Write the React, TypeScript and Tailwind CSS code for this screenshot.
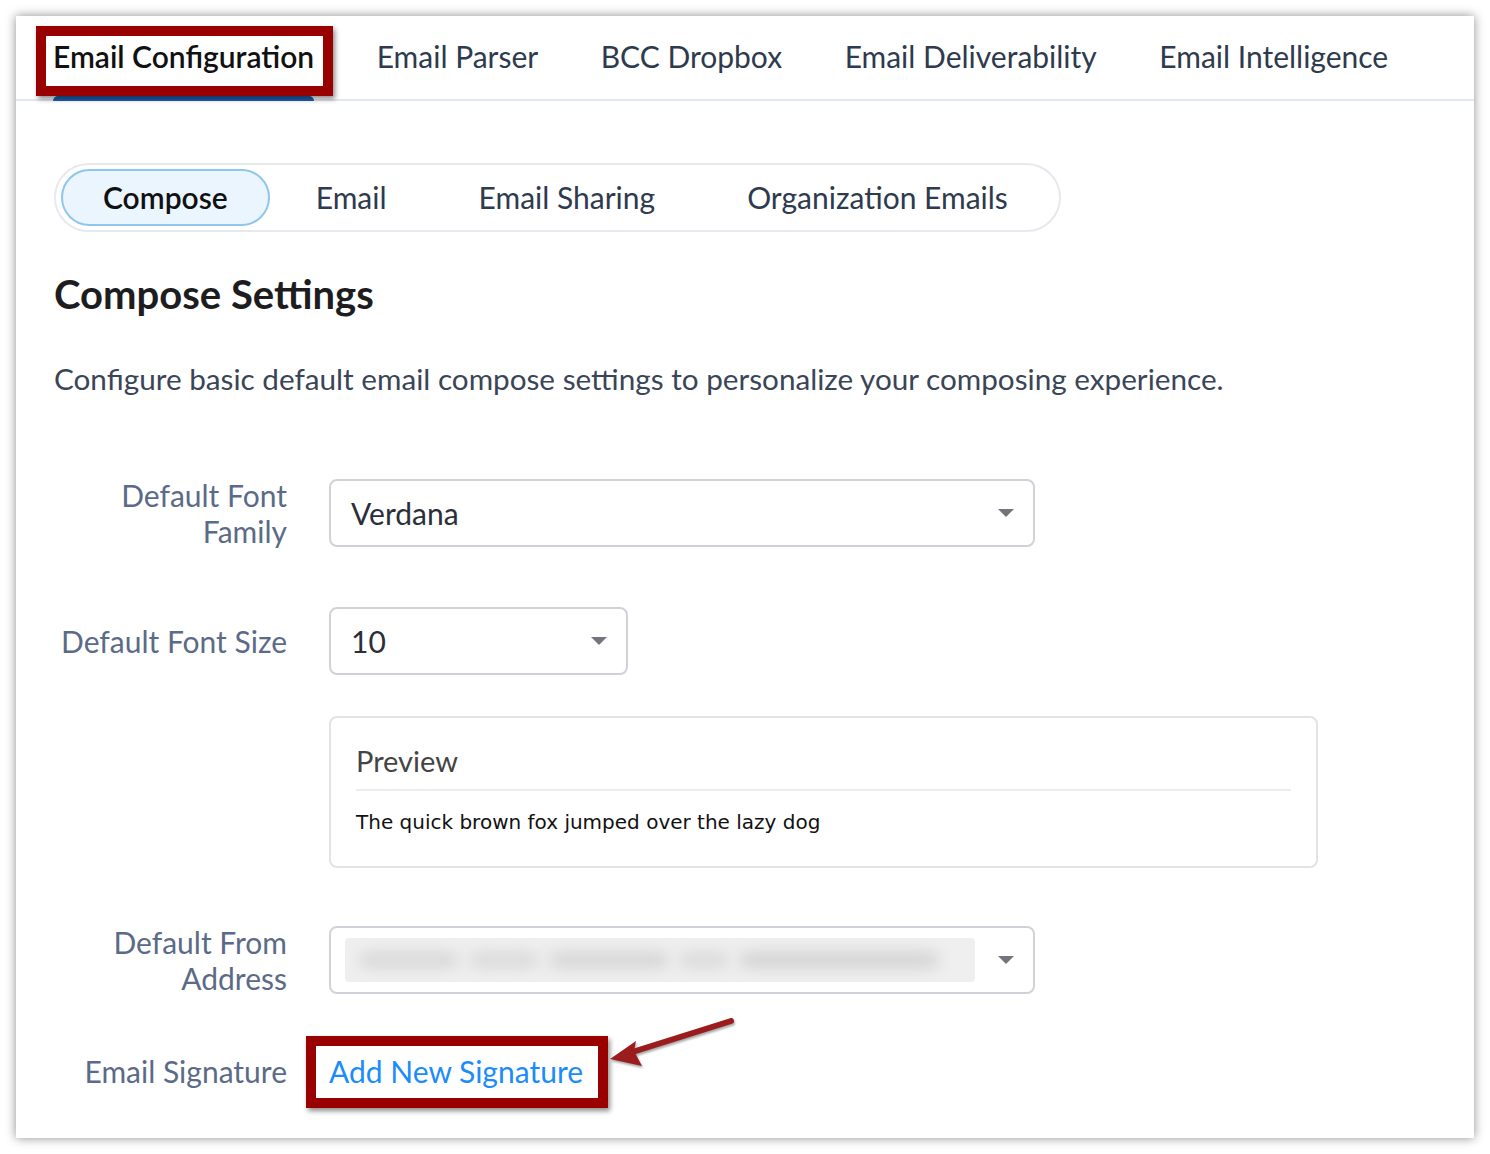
import React from "react";

const tabs = ["Email Configuration", "Email Parser", "BCC Dropbox", "Email Deliverability", "Email Intelligence"];
const subTabs = ["Compose", "Email", "Email Sharing", "Organization Emails"];

function Caret() {
  return (
    <svg width="18" height="10" viewBox="0 0 18 10" className="shrink-0">
      <path d="M1 1h16l-8 8z" fill="#72767c" />
    </svg>
  );
}

function Select({ width, children }: { width: string; children: React.ReactNode }) {
  return (
    <div className={`${width} flex h-[68px] items-center justify-between rounded-lg border-2 border-[#cfd3d9] bg-white pl-[20px] pr-[18px]`}>
      {children}
      <Caret />
    </div>
  );
}

export default function App() {
  return (
    <div className="min-h-[1154px] w-[1490px] bg-white pt-4 pl-4 font-['Lato','Liberation_Sans',sans-serif]">
      <div className="relative h-[1122px] w-[1458px] bg-white shadow-[0_0_10px_rgba(0,0,0,0.45)]">
        {/* top tabs */}
        <div className="flex h-[85px] items-end gap-[62.5px] border-b-2 border-[#e3e8ef] pl-[37px]">
          {tabs.map((t, i) => (
            <div key={t} className="relative flex h-full items-center pb-[3px]">
              <span className={`text-[30px] ${i === 0 ? "font-semibold text-[#111]" : "text-[#2e3a4e]"}`}>{t}</span>
              {i === 0 && <div className="absolute bottom-[-2px] left-0 right-0 h-[5px] rounded-t-md bg-[#1d5fae]" />}
            </div>
          ))}
        </div>

        {/* annotation: Email Configuration */}
        <div className="pointer-events-none absolute left-[20px] top-[10px] h-[70px] w-[297px] border-[10px] border-[#990000] shadow-[2px_3px_5px_rgba(0,0,0,0.45)]" />

        <div className="pl-[38px] pt-[62px]">
          {/* sub tabs */}
          <div className="inline-flex h-[69px] items-center rounded-full border-2 border-[#e6e9ee] p-[5px]">
            {subTabs.map((t, i) => (
              <div
                key={t}
                className={`flex h-[57px] items-center rounded-full text-[30px] ${
                  i === 0
                    ? "border-2 border-[#8ec6ee] bg-[#ebf5fe] px-[40px] font-semibold text-[#111]"
                    : "px-[46px] text-[#2e3a4e]"
                }`}
              >
                {t}
              </div>
            ))}
          </div>

          <h1 className="mt-[36px] text-[40px] font-bold leading-[52px] text-[#1d1d1f]">Compose Settings</h1>
          <p className="mt-[40px] text-[29.7px] leading-[38px] text-[#3a4557]">
            Configure basic default email compose settings to personalize your composing experience.
          </p>

          {/* form */}
          <div className="mt-[79px] grid grid-cols-[233px_1fr] items-center gap-x-[42px] text-[30px] text-[#5b6b87]">
            <div className="flex flex-col items-end text-right leading-[36px]">
              <span>Default Font</span>
              <span>Family</span>
            </div>
            <Select width="w-[706px]">
              <span className="text-[#2a2f38]">Verdana</span>
            </Select>

            <div className="mt-[58px] text-right leading-[36px]">Default Font Size</div>
            <div className="mt-[58px]">
              <Select width="w-[299px]">
                <span className="text-[#2a2f38]">10</span>
              </Select>
            </div>

            <div />
            <div className="mt-[41px] h-[152px] w-[989px] rounded-lg border-2 border-[#e1e3e6] px-[25px] pt-[25px]">
              <div className="border-b-2 border-[#ececec] pb-[10px] text-[29px] leading-[36px] text-[#444]">Preview</div>
              <div className="mt-[18px] font-['DejaVu_Sans','Verdana',sans-serif] text-[20px] leading-[26px] text-[#111]">
                The quick brown fox jumped over the lazy dog
              </div>
            </div>

            <div className="mt-[56px] flex flex-col items-end text-right leading-[36px]">
              <span>Default From</span>
              <span>Address</span>
            </div>
            <div className="mt-[56px]">
              <Select width="w-[706px]">
                <div className="-ml-[6px] flex h-[44px] w-[630px] items-center gap-[10px] overflow-hidden rounded-sm bg-[#efefef] px-[14px]">
                  <div className="h-[18px] w-[100px] rounded-full bg-[#dadada] blur-[7px]" />
                  <div className="h-[18px] w-[70px] rounded-full bg-[#dcdcdc] blur-[7px]" />
                  <div className="h-[18px] w-[120px] rounded-full bg-[#d8d8d8] blur-[7px]" />
                  <div className="h-[18px] w-[50px] rounded-full bg-[#dcdcdc] blur-[7px]" />
                  <div className="h-[18px] w-[200px] rounded-full bg-[#d6d6d6] blur-[7px]" />
                </div>
              </Select>
            </div>

            <div className="mt-[57px] text-right leading-[36px]">Email Signature</div>
            <div className="mt-[57px] leading-[36px]">
              <span className="text-[#1b8cf9]">Add New Signature</span>
            </div>
          </div>
        </div>

        {/* annotation: Add New Signature */}
        <div className="pointer-events-none absolute left-[290px] top-[1020px] h-[72px] w-[302px] border-[10px] border-[#990000] shadow-[2px_3px_5px_rgba(0,0,0,0.45)]" />
        <svg className="pointer-events-none absolute left-[580px] top-[995px]" width="150" height="60" viewBox="0 0 150 60">
          <g filter="drop-shadow(1px 2px 1px rgba(0,0,0,0.35))">
            <path d="M135 10 L30 43" stroke="#9b1c1c" strokeWidth="6" strokeLinecap="round" />
            <path d="M14 48 L40 30 L38 40 L46 55 Z" fill="#9b1c1c" />
          </g>
        </svg>
      </div>
    </div>
  );
}
